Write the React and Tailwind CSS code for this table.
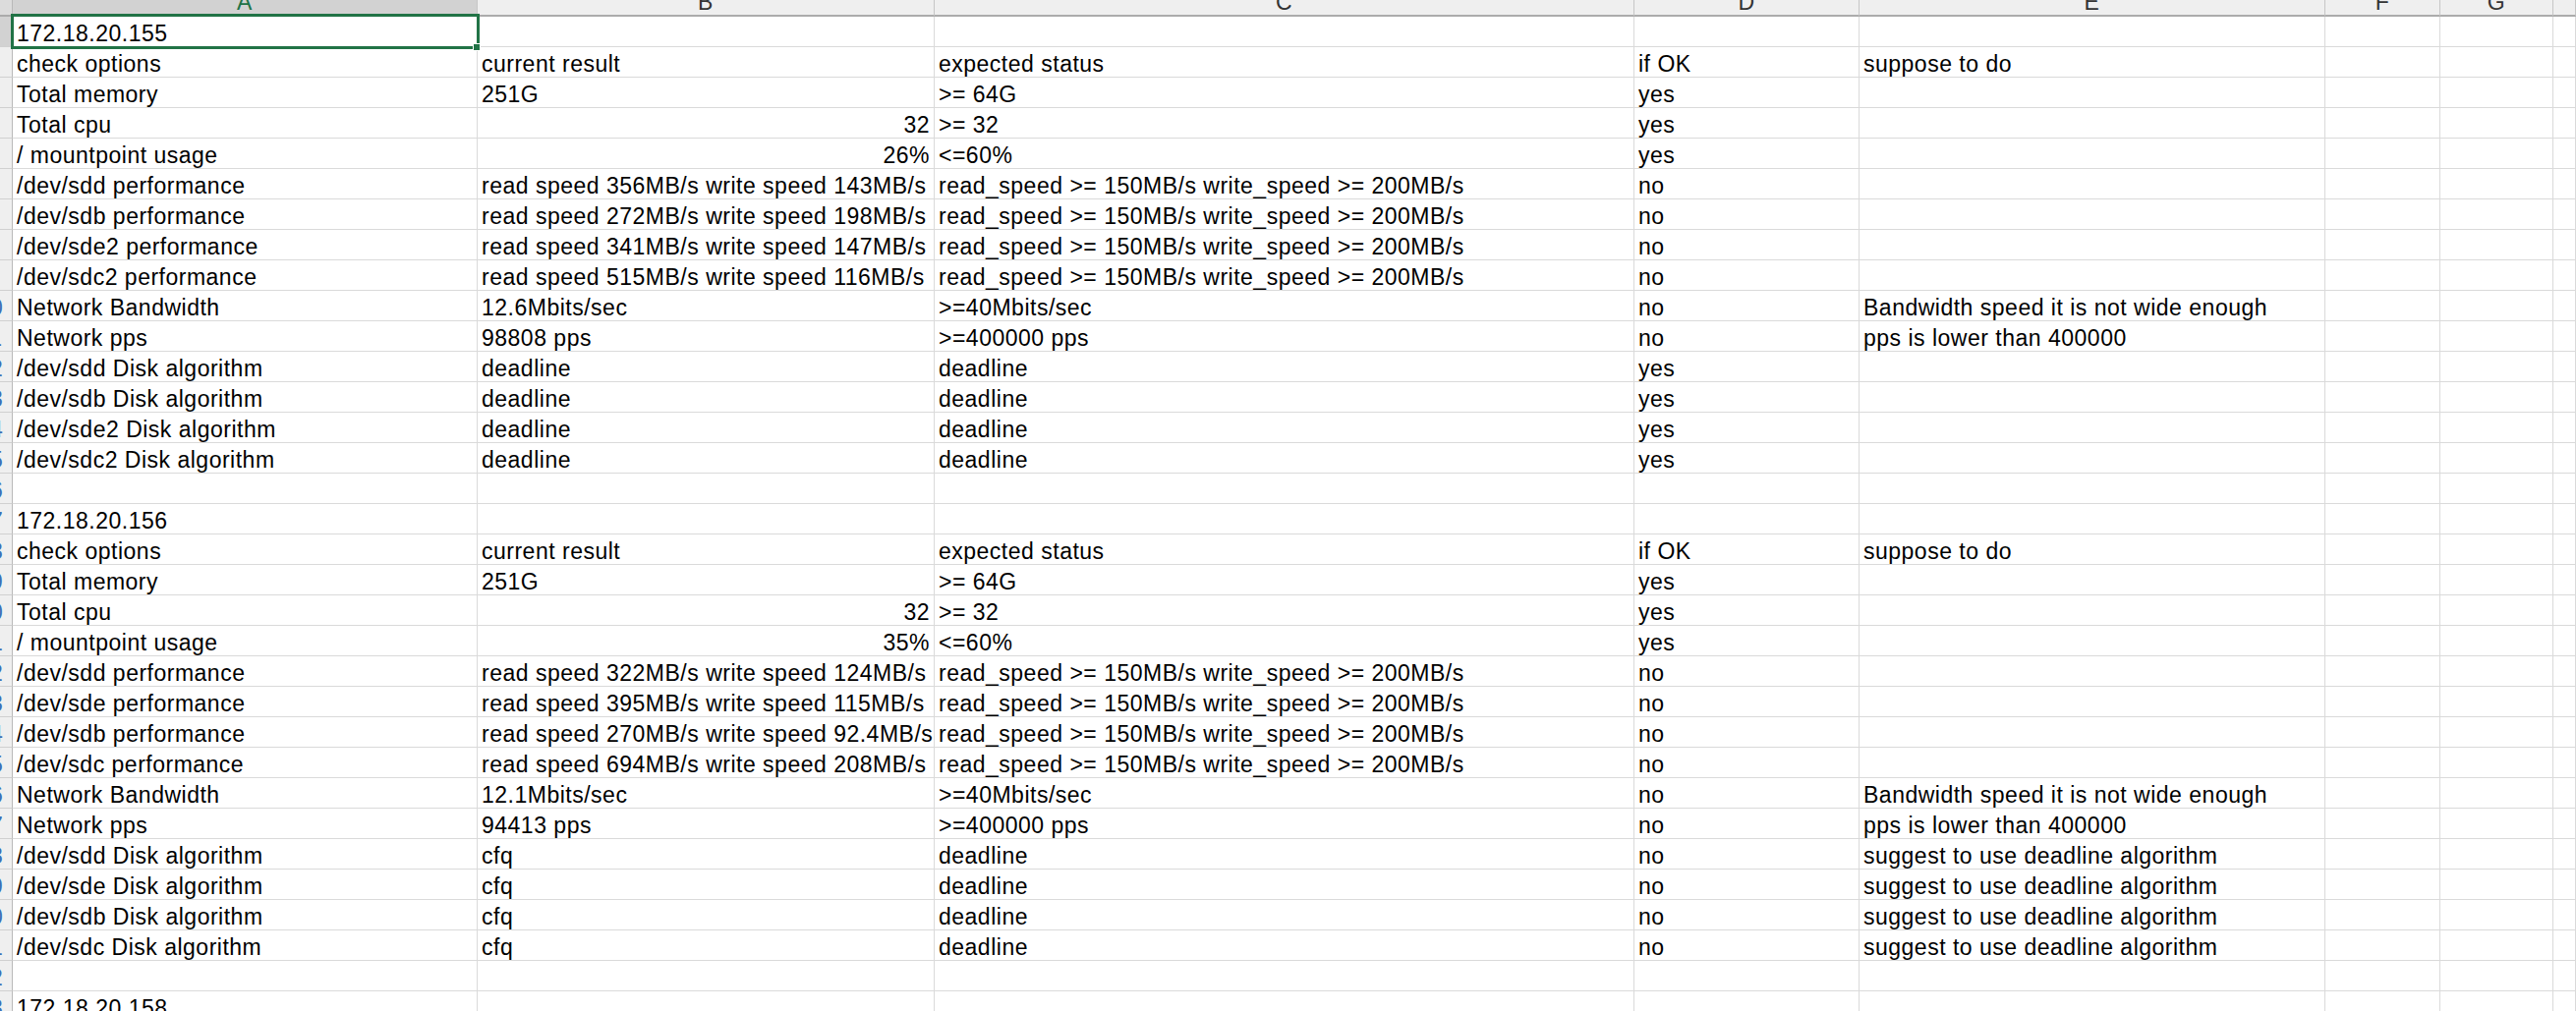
import React from "react";

const perfExpected = "read_speed >= 150MB/s write_speed >= 200MB/s";
const bwNote = "Bandwidth speed it is not wide enough";
const ppsNote = "pps is lower than 400000";
const algoNote = "suggest to use deadline algorithm";

// one entry per sheet row, columns A..E
const rows = [
  ["172.18.20.155"],
  ["check options", "current result", "expected status", "if OK", "suppose to do"],
  ["Total memory", "251G", ">= 64G", "yes"],
  ["Total cpu", "32", ">= 32", "yes"],
  ["/ mountpoint usage", "26%", "<=60%", "yes"],
  ["/dev/sdd performance", "read speed 356MB/s write speed 143MB/s", perfExpected, "no"],
  ["/dev/sdb performance", "read speed 272MB/s write speed 198MB/s", perfExpected, "no"],
  ["/dev/sde2 performance", "read speed 341MB/s write speed 147MB/s", perfExpected, "no"],
  ["/dev/sdc2 performance", "read speed 515MB/s write speed 116MB/s", perfExpected, "no"],
  ["Network Bandwidth", "12.6Mbits/sec", ">=40Mbits/sec", "no", bwNote],
  ["Network pps", "98808 pps", ">=400000 pps", "no", ppsNote],
  ["/dev/sdd Disk algorithm", "deadline", "deadline", "yes"],
  ["/dev/sdb Disk algorithm", "deadline", "deadline", "yes"],
  ["/dev/sde2 Disk algorithm", "deadline", "deadline", "yes"],
  ["/dev/sdc2 Disk algorithm", "deadline", "deadline", "yes"],
  [],
  ["172.18.20.156"],
  ["check options", "current result", "expected status", "if OK", "suppose to do"],
  ["Total memory", "251G", ">= 64G", "yes"],
  ["Total cpu", "32", ">= 32", "yes"],
  ["/ mountpoint usage", "35%", "<=60%", "yes"],
  ["/dev/sdd performance", "read speed 322MB/s write speed 124MB/s", perfExpected, "no"],
  ["/dev/sde performance", "read speed 395MB/s write speed 115MB/s", perfExpected, "no"],
  ["/dev/sdb performance", "read speed 270MB/s write speed 92.4MB/s", perfExpected, "no"],
  ["/dev/sdc performance", "read speed 694MB/s write speed 208MB/s", perfExpected, "no"],
  ["Network Bandwidth", "12.1Mbits/sec", ">=40Mbits/sec", "no", bwNote],
  ["Network pps", "94413 pps", ">=400000 pps", "no", ppsNote],
  ["/dev/sdd Disk algorithm", "cfq", "deadline", "no", algoNote],
  ["/dev/sde Disk algorithm", "cfq", "deadline", "no", algoNote],
  ["/dev/sdb Disk algorithm", "cfq", "deadline", "no", algoNote],
  ["/dev/sdc Disk algorithm", "cfq", "deadline", "no", algoNote],
  [],
  ["172.18.20.158"],
];

const letters = ["A", "B", "C", "D", "E", "F", "G", ""];

function ColHeader({ letter }) {
  const selected = letter === "A";
  return (
    <div
      className={
        "h-[17px] overflow-hidden border-r border-r-[#c6c6c6] border-b-2 border-b-[#ababab] text-center leading-[4px] " +
        (selected ? "bg-[#d2d2d2] text-[#217346]" : "bg-[#efefef] text-[#333333]")
      }
    >
      {letter}
    </div>
  );
}

function RowHeader({ n }) {
  return (
    <div
      className={
        "h-[31px] overflow-hidden border-r border-r-[#b9b9b9] border-b border-b-[#d0d0d0] " +
        (n === 1 ? "bg-[#d2d2d2]" : "bg-[#efefef]")
      }
    >
      <div className="ml-[-32px] w-[44px] pt-[2px] text-center leading-[30px] text-[#3b6fb6]">{n}</div>
    </div>
  );
}

function Cell({ value, first }) {
  const right = /^\d+%?$/.test(value || "");
  return (
    <div
      className={
        "relative h-[31px] whitespace-nowrap border-r border-b border-[#dadada] px-[4px] pt-[2px] leading-[30px] " +
        (right ? "text-right" : "text-left") +
        (first ? "" : " overflow-hidden")
      }
    >
      {value}
      {first && (
        <div className="absolute left-[-2px] top-[-3px] z-10 h-[36px] w-[477px] border-[3px] border-[#217346]">
          <div className="absolute bottom-[-5px] right-[-4px] h-[8px] w-[8px] border border-white bg-[#217346]" />
        </div>
      )}
    </div>
  );
}

export default function App() {
  return (
    <div className="h-[1029px] w-[2621px] overflow-hidden bg-white font-['Liberation_Sans',Arial,sans-serif] text-[23px] tracking-[0.5px] text-black">
      <div className="grid grid-cols-[13px_473px_465px_712px_229px_474px_117px_115px_1fr]">
        <div className="h-[17px] border-r border-r-[#b9b9b9] border-b-2 border-b-[#ababab] bg-[#dcdcdc]" />
        {letters.map((l, c) => (
          <ColHeader key={c} letter={l} />
        ))}

        {rows.map((r, i) => (
          <React.Fragment key={i}>
            <RowHeader n={i + 1} />
            {letters.map((l, c) => (
              <Cell key={c} value={r[c]} first={i === 0 && c === 0} />
            ))}
          </React.Fragment>
        ))}
      </div>
    </div>
  );
}
